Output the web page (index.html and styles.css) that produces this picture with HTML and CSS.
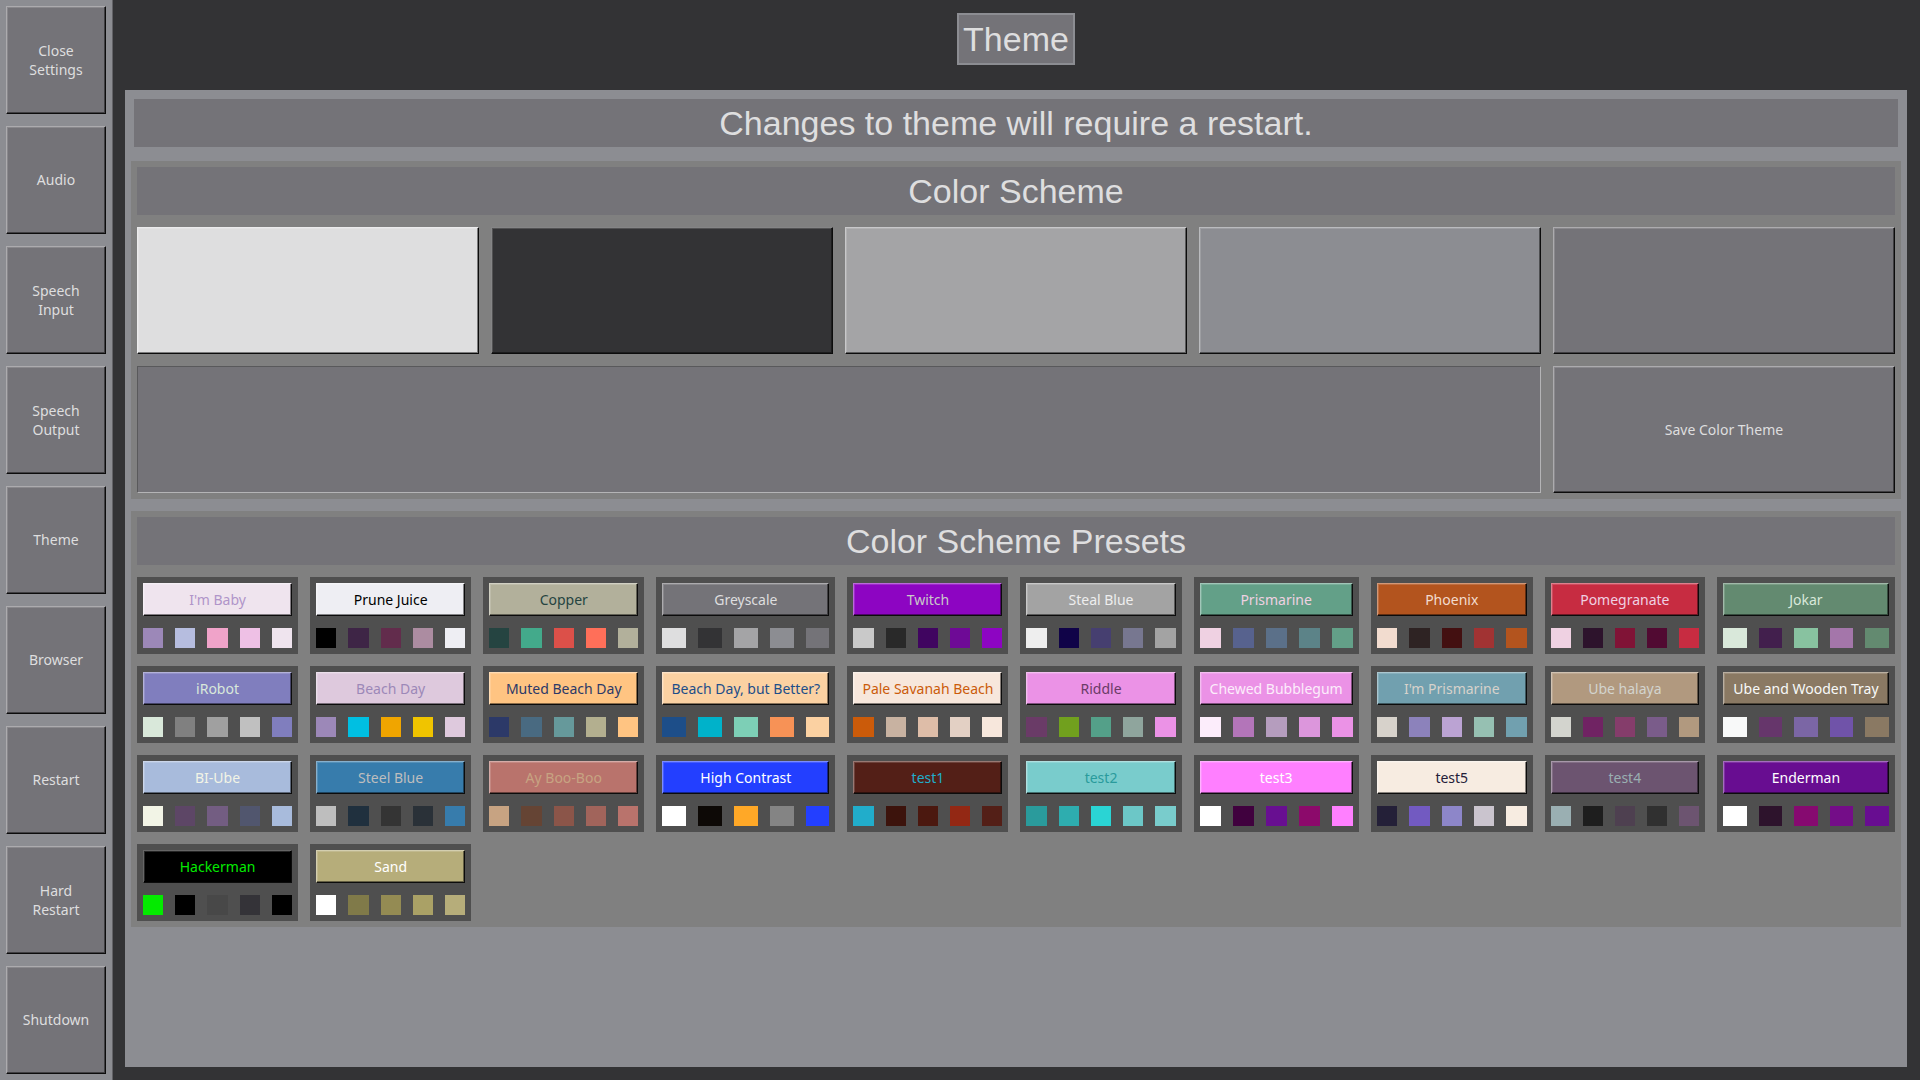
FILE: index.html
```html
<!DOCTYPE html>
<html lang="en">
<head>
<meta charset="utf-8">
<meta name="viewport" content="width=device-width, initial-scale=1">
<title>Theme</title>
<link rel="stylesheet" href="styles.css">
</head>
<body>
<div class="app">
  <nav class="sidebar" aria-label="Settings">
    <button type="button" class="btn">Close<br>Settings</button>
    <button type="button" class="btn">Audio</button>
    <button type="button" class="btn">Speech<br>Input</button>
    <button type="button" class="btn">Speech<br>Output</button>
    <button type="button" class="btn">Theme</button>
    <button type="button" class="btn">Browser</button>
    <button type="button" class="btn">Restart</button>
    <button type="button" class="btn">Hard<br>Restart</button>
    <button type="button" class="btn">Shutdown</button>
  </nav>
  <main class="main">
    <h1 class="page-title">Theme</h1>
    <div class="panel">
      <p class="notice">Changes to theme will require a restart.</p>
      <section class="section">
        <h2 class="section-title">Color Scheme</h2>
        <div class="scheme">
          <button type="button" class="btn color-text" aria-label="Text color"></button>
          <button type="button" class="btn color-back" aria-label="Background color"></button>
          <button type="button" class="btn color-accent" aria-label="Accent color"></button>
          <button type="button" class="btn color-frame" aria-label="Frame color"></button>
          <button type="button" class="btn color-button" aria-label="Button color"></button>
          <input type="text" class="theme-name" aria-label="Theme name">
          <button type="button" class="btn">Save Color Theme</button>
        </div>
      </section>
      <section class="section">
        <h2 class="section-title">Color Scheme Presets</h2>
        <div class="presets">
          <div class="preset im-baby"><button type="button" class="btn">I'm Baby</button><i></i><i></i><i></i><i></i><i></i></div>
          <div class="preset prune-juice"><button type="button" class="btn">Prune Juice</button><i></i><i></i><i></i><i></i><i></i></div>
          <div class="preset copper"><button type="button" class="btn">Copper</button><i></i><i></i><i></i><i></i><i></i></div>
          <div class="preset greyscale"><button type="button" class="btn">Greyscale</button><i></i><i></i><i></i><i></i><i></i></div>
          <div class="preset twitch"><button type="button" class="btn">Twitch</button><i></i><i></i><i></i><i></i><i></i></div>
          <div class="preset steal-blue"><button type="button" class="btn">Steal Blue</button><i></i><i></i><i></i><i></i><i></i></div>
          <div class="preset prismarine"><button type="button" class="btn">Prismarine</button><i></i><i></i><i></i><i></i><i></i></div>
          <div class="preset phoenix"><button type="button" class="btn">Phoenix</button><i></i><i></i><i></i><i></i><i></i></div>
          <div class="preset pomegranate"><button type="button" class="btn">Pomegranate</button><i></i><i></i><i></i><i></i><i></i></div>
          <div class="preset jokar"><button type="button" class="btn">Jokar</button><i></i><i></i><i></i><i></i><i></i></div>

          <div class="preset irobot"><button type="button" class="btn">iRobot</button><i></i><i></i><i></i><i></i><i></i></div>
          <div class="preset beach-day"><button type="button" class="btn">Beach Day</button><i></i><i></i><i></i><i></i><i></i></div>
          <div class="preset muted-beach"><button type="button" class="btn">Muted Beach Day</button><i></i><i></i><i></i><i></i><i></i></div>
          <div class="preset better-beach"><button type="button" class="btn">Beach Day, but Better?</button><i></i><i></i><i></i><i></i><i></i></div>
          <div class="preset pale-savanah"><button type="button" class="btn">Pale Savanah Beach</button><i></i><i></i><i></i><i></i><i></i></div>
          <div class="preset riddle"><button type="button" class="btn">Riddle</button><i></i><i></i><i></i><i></i><i></i></div>
          <div class="preset bubblegum"><button type="button" class="btn">Chewed Bubblegum</button><i></i><i></i><i></i><i></i><i></i></div>
          <div class="preset im-prismarine"><button type="button" class="btn">I'm Prismarine</button><i></i><i></i><i></i><i></i><i></i></div>
          <div class="preset ube-halaya"><button type="button" class="btn">Ube halaya</button><i></i><i></i><i></i><i></i><i></i></div>
          <div class="preset ube-tray"><button type="button" class="btn">Ube and Wooden Tray</button><i></i><i></i><i></i><i></i><i></i></div>

          <div class="preset bi-ube"><button type="button" class="btn">BI-Ube</button><i></i><i></i><i></i><i></i><i></i></div>
          <div class="preset steel-blue"><button type="button" class="btn">Steel Blue</button><i></i><i></i><i></i><i></i><i></i></div>
          <div class="preset ay-boo-boo"><button type="button" class="btn">Ay Boo-Boo</button><i></i><i></i><i></i><i></i><i></i></div>
          <div class="preset high-contrast"><button type="button" class="btn">High Contrast</button><i></i><i></i><i></i><i></i><i></i></div>
          <div class="preset test1"><button type="button" class="btn">test1</button><i></i><i></i><i></i><i></i><i></i></div>
          <div class="preset test2"><button type="button" class="btn">test2</button><i></i><i></i><i></i><i></i><i></i></div>
          <div class="preset test3"><button type="button" class="btn">test3</button><i></i><i></i><i></i><i></i><i></i></div>
          <div class="preset test5"><button type="button" class="btn">test5</button><i></i><i></i><i></i><i></i><i></i></div>
          <div class="preset test4"><button type="button" class="btn">test4</button><i></i><i></i><i></i><i></i><i></i></div>
          <div class="preset enderman"><button type="button" class="btn">Enderman</button><i></i><i></i><i></i><i></i><i></i></div>

          <div class="preset hackerman"><button type="button" class="btn">Hackerman</button><i></i><i></i><i></i><i></i><i></i></div>
          <div class="preset sand"><button type="button" class="btn">Sand</button><i></i><i></i><i></i><i></i><i></i></div>
        </div>
      </section>
    </div>
  </main>
</div>
</body>
</html>
```
FILE: styles.css
```css
:root {
  --text: #dededf;
  --back: #333335;
  --accent: #a4a4a6;
  --frame: #8c8d92;
  --button: #747378;
}

* {
  box-sizing: border-box;
}

body {
  margin: 0;
  background: var(--back);
  color: var(--text);
  font-family: "Noto Sans", sans-serif;
  font-size: 14px;
  line-height: 19px;
}

.app {
  display: flex;
  min-height: 100vh;
}

/* Raised button: light upper left edge, black lower right edge */
.btn {
  --face: var(--button);
  --light: color-mix(in srgb, var(--face), #fff 40%);
  min-width: 0;
  padding: 0 0 1px;
  border: 1px solid;
  border-color: var(--light) #0c0c0c #0c0c0c var(--light);
  border-radius: 0;
  background: var(--face);
  box-shadow:
    inset -1px -1px color-mix(in srgb, var(--face), #000 45%),
    inset 1px 1px color-mix(in srgb, var(--face), #fff 15%);
  color: var(--text);
  font: inherit;
  white-space: nowrap;
}

.sidebar {
  display: flex;
  flex-direction: column;
  gap: 12px;
  flex: none;
  width: 113px;
  padding: 6px;
  border-right: 1px solid #626266;
  background: var(--frame);
}

.sidebar .btn {
  flex: 1;
}

.main {
  display: flex;
  flex-direction: column;
  flex: 1;
  min-width: 0;
  padding: 13px 13px 13px 12px;
}

.page-title,
.notice,
.section-title {
  margin: 0;
  background: var(--button);
  font: 34px/48px "Liberation Sans", Arial, sans-serif;
  text-align: center;
}

.page-title {
  align-self: center;
  margin-bottom: 25px;
  padding: 0 4px;
  border: 2px solid var(--frame);
}

.panel {
  display: flex;
  flex-direction: column;
  gap: 12px;
  flex: 1;
  padding: 6px;
  background: var(--frame);
}

.notice {
  margin: 3px 3px 2px;
}

.section {
  padding: 6px;
  background: #808080;
}

.section-title {
  margin-bottom: 12px;
}

.scheme {
  display: grid;
  grid-template-columns: repeat(5, minmax(0, 1fr));
  grid-auto-rows: 127px;
  gap: 12px;
}

.color-text { --face: var(--text); }
.color-back { --face: var(--back); }
.color-accent { --face: var(--accent); }
.color-frame { --face: var(--frame); }

.theme-name {
  grid-column: span 4;
  padding: 0 12px;
  border: 1px solid;
  border-color: #59595b #b4b4b6 #b4b4b6 #59595b;
  border-radius: 0;
  background: var(--button);
  color: var(--text);
  font: inherit;
}

.presets {
  display: grid;
  grid-template-columns: 161fr 161fr 161fr 179fr 161fr 161fr 165fr 162fr 160fr 178fr;
  gap: 12px;
}

.preset {
  display: grid;
  grid-template-columns: repeat(5, 1fr);
  grid-template-rows: 33px 20px;
  gap: 12px;
  padding: 6px;
  background: #4f4f4f;
}

.preset .btn {
  --face: var(--c5);
  grid-column: 1 / -1;
  color: var(--c1);
}

.preset i:nth-of-type(1) { background: var(--c1); }
.preset i:nth-of-type(2) { background: var(--c2); }
.preset i:nth-of-type(3) { background: var(--c3); }
.preset i:nth-of-type(4) { background: var(--c4); }
.preset i:nth-of-type(5) { background: var(--c5); }

.im-baby { --c1: #9c88b8; --c2: #b6bddf; --c3: #f0a3c9; --c4: #eec0e5; --c5: #efe4ee; }
.im-baby .btn { color: #b095c9; }
.prune-juice { --c1: #000000; --c2: #3e2546; --c3: #622c4c; --c4: #ac8ca1; --c5: #eeeef3; }
.copper { --c1: #254441; --c2: #43aa8b; --c3: #dc5049; --c4: #ff6f59; --c5: #b2b09b; }
.greyscale { --c1: #dededf; --c2: #333335; --c3: #a4a4a6; --c4: #8c8d92; --c5: #747378; }
.twitch { --c1: #c9c9c9; --c2: #292929; --c3: #400560; --c4: #6e0a96; --c5: #8d05c2; }
.steal-blue { --c1: #eeeeee; --c2: #100348; --c3: #463f70; --c4: #777790; --c5: #a3a3a3; }
.prismarine { --c1: #efd1e2; --c2: #57628e; --c3: #5b7089; --c4: #5c8388; --c5: #63a088; }
.phoenix { --c1: #f2dccf; --c2: #2e2323; --c3: #431011; --c4: #a13333; --c5: #b3541e; }
.pomegranate { --c1: #efd1e2; --c2: #2d132c; --c3: #801336; --c4: #510a32; --c5: #c72c41; }
.jokar { --c1: #d9e8da; --c2: #421f4d; --c3: #88c2a0; --c4: #a476aa; --c5: #638a70; }

.irobot { --c1: #d9e8da; --c2: #808080; --c3: #a0a0a0; --c4: #c0c0c0; --c5: #807ebe; }
.beach-day { --c1: #9c88b8; --c2: #00bfe2; --c3: #f0a500; --c4: #f0c400; --c5: #dec9dd; }
.muted-beach { --c1: #2c3968; --c2: #496a81; --c3: #66999b; --c4: #b3af8f; --c5: #ffc482; }
.better-beach { --c1: #1d4e89; --c2: #00b2ca; --c3: #7dcfb6; --c4: #f79256; --c5: #fbd1a2; }
.pale-savanah { --c1: #cb5b0a; --c2: #c8b2a1; --c3: #debda8; --c4: #e3d0c4; --c5: #f7e7dc; }
.riddle { --c1: #6a3b67; --c2: #71a01e; --c3: #54a089; --c4: #8fa59d; --c5: #eb92e6; }
.bubblegum { --c1: #fcedfb; --c2: #b375b9; --c3: #b59dbe; --c4: #dc96dc; --c5: #eb92e6; }
.im-prismarine { --c1: #d7d2cb; --c2: #8c82bb; --c3: #bba3d3; --c4: #96c0b2; --c5: #71a0af; }
.ube-halaya { --c1: #d3d4ce; --c2: #702363; --c3: #853d6b; --c4: #7a5c8a; --c5: #b1997f; }
.ube-tray { --c1: #f8f9f9; --c2: #66366b; --c3: #7b66a5; --c4: #7053a9; --c5: #8a7963; }

.bi-ube { --c1: #f2f4e6; --c2: #5d4666; --c3: #735d82; --c4: #51566e; --c5: #a8bbdc; }
.steel-blue { --c1: #bebebe; --c2: #20303e; --c3: #343434; --c4: #2a3138; --c5: #377cac; }
.ay-boo-boo { --c1: #c7a382; --c2: #654434; --c3: #8b5549; --c4: #a1645b; --c5: #b9736c; }
.high-contrast { --c1: #ffffff; --c2: #0d0906; --c3: #ffa827; --c4: #848484; --c5: #233fff; }
.test1 { --c1: #21adcb; --c2: #3c130c; --c3: #4b180f; --c4: #932814; --c5: #531f17; }
.test2 { --c1: #2a9b9c; --c2: #2eadaf; --c3: #2ad4d4; --c4: #6cc7c7; --c5: #79cccc; }
.test3 { --c1: #ffffff; --c2: #40013e; --c3: #680f91; --c4: #8c0a6b; --c5: #ff7fff; }
.test5 { --c1: #242038; --c2: #725ac1; --c3: #8d86c9; --c4: #cac4ce; --c5: #f7ece1; }
.test4 { --c1: #9aafb2; --c2: #1e1e1e; --c3: #4e4050; --c4: #303030; --c5: #6c5470; }
.enderman { --c1: #ffffff; --c2: #2d132c; --c3: #860a70; --c4: #740d88; --c5: #680d91; }

.hackerman { --c1: #04ea00; --c2: #000000; --c3: #484848; --c4: #343338; --c5: #000000; }
.sand { --c1: #ffffff; --c2: #807a49; --c3: #948b53; --c4: #aaa166; --c5: #b6ad7a; }
```
